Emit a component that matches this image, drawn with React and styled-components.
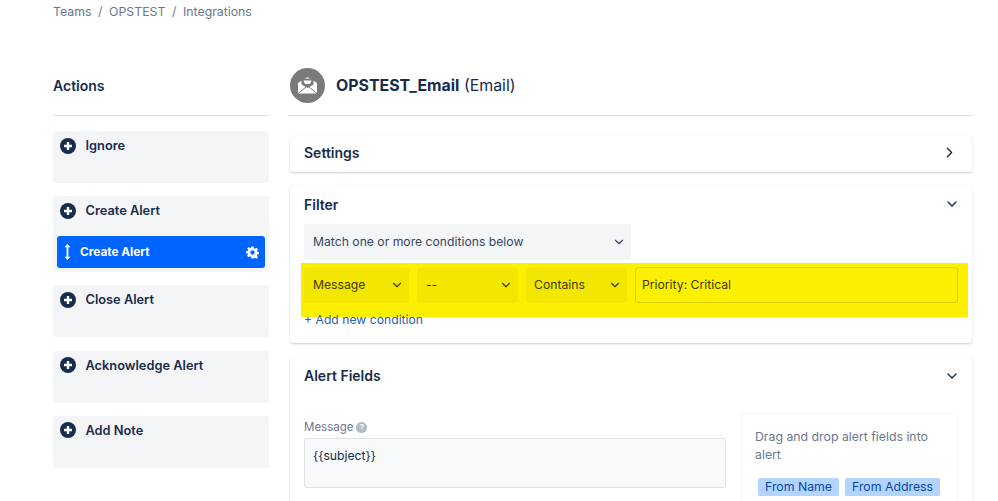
import styled, { createGlobalStyle } from "styled-components";
import { ChevronDown, ChevronRight } from "lucide-react";

const GlobalStyle = createGlobalStyle`
  html, body {
    margin: 0;
    height: 501px;
    overflow: hidden;
    background: #fff;
    font-family: Inter, "Liberation Sans", sans-serif;
    color: #172b4d;
  }
  * { box-sizing: border-box; }
`;

const Page = styled.div`
  width: 998px;
  height: 501px;
  overflow: hidden;
  padding: 4px 25px 0 53px;
`;

const Breadcrumb = styled.div`
  display: flex;
  gap: 6.6px;
  height: 16px;
  line-height: 16px;
  font-size: 12.3px;
  color: #6b778c;
`;

const Columns = styled.div`
  display: grid;
  grid-template-columns: 216px 685px;
  gap: 19px;
  margin-top: 30px;
`;

const ColumnHead = styled.div`
  display: flex;
  align-items: center;
  gap: 11px;
  height: 66px;
  padding-top: 5px;
  border-bottom: 1px solid #dfe1e6;
`;

const ActionsTitle = styled.h2`
  margin: 0;
  font-size: 14px;
  font-weight: 600;
`;

const ActionList = styled.div`
  display: flex;
  flex-direction: column;
  gap: 13.2px;
  margin-top: 15px;
`;

const ActionCard = styled.div`
  min-height: 52px;
  padding: 6px 4px 4px;
  border-radius: 3px;
  background: #f4f5f7;
`;

const ActionHead = styled.div`
  display: flex;
  align-items: center;
  gap: 9.5px;
  height: 17px;
  padding-left: 3px;
  font-size: 12.8px;
  font-weight: 600;
`;

const ChosenAction = styled.div`
  display: flex;
  align-items: center;
  height: 32px;
  margin-top: 17px;
  padding: 0 6px;
  border-radius: 3px;
  background: #0065ff;
  color: #fff;
  font-size: 11.8px;
  font-weight: 700;
`;

const ChosenLabel = styled.span`
  flex: 1;
  margin-left: 8px;
`;

const Main = styled.div`
  min-width: 0;
`;

const Avatar = styled.div`
  display: flex;
  flex: none;
  align-items: center;
  justify-content: center;
  width: 35px;
  height: 35px;
  margin-left: 2px;
  border-radius: 50%;
  background: #7a7a7a;
`;

const IntegrationName = styled.h1`
  margin: 0;
  font-size: 15.9px;
  font-weight: 400;

  b {
    font-weight: 700;
  }
`;

const Panels = styled.div`
  display: flex;
  flex-direction: column;
  gap: 14px;
  margin: 20px 1px 0 2px;
`;

const Panel = styled.section`
  padding: 0 14px;
  border-radius: 3px;
  background: #fff;
  box-shadow: 0 1px 2px rgba(9, 30, 66, 0.2), 0 0 1px rgba(9, 30, 66, 0.08);
`;

const PanelHead = styled.div`
  display: flex;
  align-items: center;
  justify-content: space-between;
  height: ${(p) => p.$height}px;
  padding-bottom: ${(p) => p.$lift || 0}px;
  font-size: 14px;
  font-weight: 600;

  svg {
    color: #172b4d;
  }
`;

const DownArrow = styled(ChevronDown)`
  margin-right: -2px;
`;

const Select = styled.div`
  display: flex;
  align-items: center;
  justify-content: space-between;
  width: ${(p) => p.$width}px;
  height: 36px;
  padding: 0 5px 2px ${(p) => p.$inset || 9}px;
  border-radius: 3px;
  background: ${(p) => (p.$marked ? "#f3e600" : "#f4f5f7")};
  color: ${(p) => (p.$marked ? "#3d3a10" : "#344563")};
  font-size: 12.2px;

  svg {
    margin-top: 2px;
  }
`;

const Highlight = styled.div`
  display: flex;
  gap: 8px;
  height: 54px;
  margin: 3px -10px 0 -3px;
  padding: 4px 10px 0 3px;
  background: #fcf000;
`;

const ConditionInput = styled.div`
  display: flex;
  flex: 1;
  align-items: center;
  height: 36px;
  padding: 0 6px 2px;
  border: 1px solid #dccf00;
  border-radius: 3px;
  color: #3d3a10;
  font-size: 12.2px;
`;

const AddCondition = styled.a`
  display: block;
  height: 26px;
  line-height: 5px;
  color: #2a5ca8;
  font-size: 12.2px;
`;

const FieldsLayout = styled.div`
  display: grid;
  grid-template-columns: 422px 216px;
  gap: 15px;
  padding-top: 20px;
`;

const FieldLabel = styled.div`
  display: flex;
  align-items: center;
  gap: 3px;
  height: 16px;
  margin-top: 5px;
  color: #6b778c;
  font-size: 11.5px;
`;

const HelpDot = styled.span`
  display: flex;
  align-items: center;
  justify-content: center;
  width: 11px;
  height: 11px;
  border-radius: 50%;
  background: #b3bac5;
  color: #fff;
  font-size: 8px;
  font-weight: 700;
`;

const MessageBox = styled.div`
  height: 50px;
  margin-top: 3px;
  padding: 9px 8px;
  border: 1px solid #dfe1e6;
  border-radius: 3px;
  background: #f7f9fb;
  font-size: 12.2px;
`;

const FieldsPalette = styled.div`
  height: 120px;
  margin-left: 1px;
  padding: 14px 13px;
  border-radius: 3px;
  background: #fff;
  box-shadow: 0 0 2px rgba(9, 30, 66, 0.14);
`;

const PaletteText = styled.p`
  margin: 0;
  color: #6b778c;
  font-size: 12.3px;
  line-height: 18px;
`;

const ChipRow = styled.div`
  display: flex;
  gap: 6px;
  margin-top: 14px;
  margin-left: 3px;
`;

const Chip = styled.span`
  display: block;
  height: 18px;
  padding: 0 7px;
  line-height: 18px;
  border-radius: 2px;
  background: #b3d4ff;
  color: #0747a6;
  font-size: 12.3px;
  white-space: nowrap;
`;

const PlusIcon = () => (
  <svg width="16" height="16" viewBox="0 0 16 16">
    <circle cx="8" cy="8" r="8" fill="#172b4d" />
    <path d="M8 4v8M4 8h8" stroke="#fff" strokeWidth="2.4" />
  </svg>
);

const DragIcon = () => (
  <svg width="9" height="18" viewBox="0 0 9 18">
    <path d="M4.5 2v14" stroke="#fff" strokeWidth="1.8" />
    <path d="M1.5 4.2 4.5 1l3 3.2zM1.5 13.8 4.5 17l3-3.2z" fill="#fff" />
  </svg>
);

const GearIcon = () => (
  <svg width="13" height="13" viewBox="0 0 24 24">
    <path
      fill="#fff"
      fillRule="evenodd"
      d="M10 1h4l.6 3.2 2 .8 2.700-1.800 2.800 2.800-1.800 2.700.8 2 3.200.6v4l-3.200.6-.8 2 1.800 2.700-2.800 2.800-2.700-1.800-2 .8L14 23h-4l-.6-3.200-2-.8-2.700 1.800-2.800-2.800 1.800-2.700-.8-2L0 14v-4l3.200-.6.8-2-1.800-2.700 2.800-2.800 2.700 1.800 2-.8zM12 8a4 4 0 1 0 0 8 4 4 0 0 0 0-8z"
    />
  </svg>
);

const EnvelopeIcon = () => (
  <svg width="21" height="18" viewBox="0 0 21 18">
    <path d="M1 7 10.500 1 20 7v10.500H1z" fill="#fff" />
    <path d="M4.500 2.500h12v6l-6 3.500-6-3.500z" fill="#7a7a7a" />
    <path d="M6.500 4.500h8l-1.500 3.500h-5z" fill="#fff" />
    <path d="M1 17.500 9 11M20 17.500 12 11" stroke="#7a7a7a" strokeWidth="1" />
  </svg>
);

function Action({ title, children }) {
  return (
    <ActionCard>
      <ActionHead>
        <PlusIcon />
        {title}
      </ActionHead>
      {children}
    </ActionCard>
  );
}

function Dropdown({ width, marked, inset, children }) {
  return (
    <Select $width={width} $marked={marked} $inset={inset}>
      {children}
      <ChevronDown size={14} strokeWidth={2} />
    </Select>
  );
}

export default function App() {
  return (
    <Page>
      <GlobalStyle />
      <Breadcrumb>
        <span>Teams</span>
        <span>/</span>
        <span>OPSTEST</span>
        <span>/</span>
        <span>Integrations</span>
      </Breadcrumb>
      <Columns>
        <div>
          <ColumnHead>
            <ActionsTitle>Actions</ActionsTitle>
          </ColumnHead>
          <ActionList>
            <Action title="Ignore" />
            <Action title="Create Alert">
              <ChosenAction>
                <DragIcon />
                <ChosenLabel>Create Alert</ChosenLabel>
                <GearIcon />
              </ChosenAction>
            </Action>
            <Action title="Close Alert" />
            <Action title="Acknowledge Alert" />
            <Action title="Add Note" />
          </ActionList>
        </div>
        <Main>
          <ColumnHead>
            <Avatar>
              <EnvelopeIcon />
            </Avatar>
            <IntegrationName>
              <b>OPSTEST_Email</b> (Email)
            </IntegrationName>
          </ColumnHead>
          <Panels>
            <Panel>
              <PanelHead $height={36} $lift={4}>
                Settings
                <ChevronRight size={17} />
              </PanelHead>
            </Panel>
            <Panel>
              <PanelHead $height={38} $lift={2}>
                Filter
                <DownArrow size={16} />
              </PanelHead>
              <Dropdown width={327}>Match one or more conditions below</Dropdown>
              <Highlight>
                <Dropdown width={105} marked>Message</Dropdown>
                <Dropdown width={101} marked>--</Dropdown>
                <Dropdown width={101} marked inset={8}>Contains</Dropdown>
                <ConditionInput>Priority: Critical</ConditionInput>
              </Highlight>
              <AddCondition>+ Add new condition</AddCondition>
            </Panel>
            <Panel>
              <PanelHead $height={37}>
                Alert Fields
                <DownArrow size={16} />
              </PanelHead>
              <FieldsLayout>
                <div>
                  <FieldLabel>
                    Message <HelpDot>?</HelpDot>
                  </FieldLabel>
                  <MessageBox>{"{{subject}}"}</MessageBox>
                </div>
                <FieldsPalette>
                  <PaletteText>Drag and drop alert fields into alert</PaletteText>
                  <ChipRow>
                    <Chip>From Name</Chip>
                    <Chip>From Address</Chip>
                  </ChipRow>
                </FieldsPalette>
              </FieldsLayout>
            </Panel>
          </Panels>
        </Main>
      </Columns>
    </Page>
  );
}
